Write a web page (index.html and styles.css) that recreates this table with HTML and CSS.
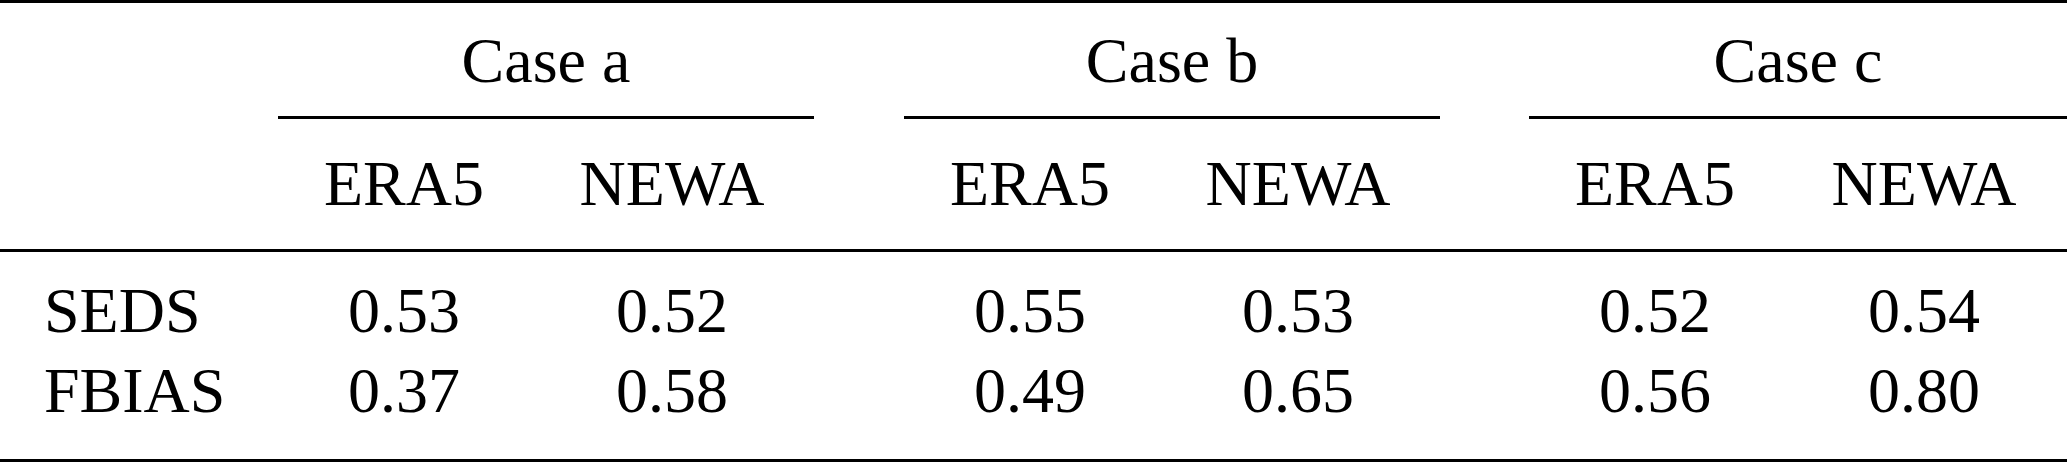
FILE: index.html
```html
<!DOCTYPE html>
<html lang="en">
<head>
    <meta charset="UTF-8">
    <meta name="viewport" content="width=device-width, initial-scale=1.0">
    <title>Scores by case</title>
    <link rel="stylesheet" href="styles.css">
</head>
<body>
    <table class="scores">
        <colgroup>
            <col class="c-stub">
            <col class="c-left"><col class="c-right">
            <col class="c-gap">
            <col class="c-left"><col class="c-right">
            <col class="c-gap2">
            <col class="c-left"><col class="c-last">
        </colgroup>
        <thead>
            <tr class="row-case">
                <th></th>
                <th colspan="2" class="case">Case a</th>
                <th></th>
                <th colspan="2" class="case">Case b</th>
                <th></th>
                <th colspan="2" class="case">Case c</th>
            </tr>
            <tr class="row-src">
                <th></th>
                <th>ERA5</th>
                <th>NEWA</th>
                <th></th>
                <th>ERA5</th>
                <th>NEWA</th>
                <th></th>
                <th>ERA5</th>
                <th>NEWA</th>
            </tr>
        </thead>
        <tbody>
            <tr class="first">
                <td class="stub">SEDS</td>
                <td>0.53</td>
                <td>0.52</td>
                <td></td>
                <td>0.55</td>
                <td>0.53</td>
                <td></td>
                <td>0.52</td>
                <td>0.54</td>
            </tr>
            <tr class="last">
                <td class="stub">FBIAS</td>
                <td>0.37</td>
                <td>0.58</td>
                <td></td>
                <td>0.49</td>
                <td>0.65</td>
                <td></td>
                <td>0.56</td>
                <td>0.80</td>
            </tr>
        </tbody>
    </table>
</body>
</html>
```

FILE: styles.css
```css
* {
    margin: 0;
    padding: 0;
    box-sizing: border-box;
}

body {
    background: #fff;
    color: #000;
    font-family: 'Liberation Serif', 'Times New Roman', serif;
    font-size: 64px;
    overflow: hidden;
}

.scores {
    width: 2067px;
    table-layout: fixed;
    border-collapse: separate;
    border-spacing: 0;
    border-top: 3px solid #000;
    border-bottom: 3px solid #000;
}

.c-stub { width: 278px; }
.c-left { width: 252px; }
.c-right { width: 284px; }
.c-gap { width: 90px; }
.c-gap2 { width: 89px; }
.c-last { width: 286px; }

th,
td {
    padding: 0;
    font-weight: normal;
    text-align: center;
    vertical-align: top;
    white-space: nowrap;
    line-height: 64px;
}

.row-case th {
    padding-top: 26px;
}

.row-case .case {
    padding-bottom: 23px;
    border-bottom: 3px solid #000;
}

.row-src th {
    padding-top: 33px;
    padding-bottom: 33px;
    border-bottom: 3px solid #000;
}

tbody td {
    line-height: 80px;
}

tbody .first td {
    padding-top: 19px;
}

tbody .last td {
    padding-bottom: 28px;
}

.stub {
    text-align: left;
    padding-left: 44px;
}
```
